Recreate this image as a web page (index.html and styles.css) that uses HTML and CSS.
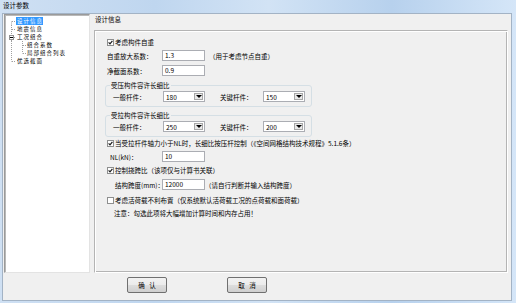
FILE: index.html
```html
<!DOCTYPE html>
<html lang="zh-CN">

<head>
    <meta charset="UTF-8">
    <title>设计参数</title>
    <link rel="stylesheet" href="styles.css">
</head>

<body>
    <div class="window">
        <div class="titlebar">设计参数</div>
        <div class="client">
            <div class="main">
                <!-- left tree -->
                <div class="tree">
                    <div class="node">
                        <svg width="11" height="8"><path d="M6.5 4.5V8M7 4.5H11" /></svg>
                        <span class="label selected">设计信息</span>
                    </div>
                    <div class="node">
                        <svg width="11" height="8"><path d="M6.5 0V8M7 4.5H11" /></svg>
                        <span class="label">地震信息</span>
                    </div>
                    <div class="node">
                        <svg width="11" height="8">
                            <path d="M6.5 0V2M6.5 7V8M9 4.5H11" />
                            <rect class="box" x="4.5" y="2.5" width="4" height="4" />
                            <path class="minus" d="M5 4.5H8" />
                        </svg>
                        <span class="label">工况组合</span>
                    </div>
                    <div class="node">
                        <svg width="21" height="8"><path d="M6.5 0V8M17.5 0V8M18 4.5H21" /></svg>
                        <span class="label">组合系数</span>
                    </div>
                    <div class="node">
                        <svg width="21" height="8"><path d="M6.5 0V8M17.5 0V4.5M18 4.5H21" /></svg>
                        <span class="label">局部组合列表</span>
                    </div>
                    <div class="node">
                        <svg width="11" height="8"><path d="M6.5 0V4.5M7 4.5H11" /></svg>
                        <span class="label">优选截面</span>
                    </div>
                </div>

                <!-- right page -->
                <div class="panel">
                    <div class="panel-title">设计信息</div>
                    <div class="panel-box">
                        <div class="row check-row mt6">
                            <span class="cb"><svg width="5" height="5"><path d="M0.6 2.4L2 3.9L4.4 0.9" /></svg></span>
                            考虑构件自重
                        </div>
                        <div class="row field-row mt3">
                            <span class="lbl">自重放大系数：</span>
                            <span class="edit">1.3</span>
                            <span class="hint">（用于考虑节点自重）</span>
                        </div>
                        <div class="row field-row mt4">
                            <span class="lbl">净截面系数：</span>
                            <span class="edit">0.9</span>
                        </div>

                        <fieldset class="group mt5">
                            <legend>受压构件容许长细比</legend>
                            <div class="group-row">
                                <span class="lbl">一般杆件：</span>
                                <span class="combo">180<i class="drop"></i></span>
                                <span class="lbl lbl-key">关键杆件：</span>
                                <span class="combo">150<i class="drop"></i></span>
                            </div>
                        </fieldset>

                        <fieldset class="group mt4">
                            <legend>受拉构件容许长细比</legend>
                            <div class="group-row">
                                <span class="lbl">一般杆件：</span>
                                <span class="combo">250<i class="drop"></i></span>
                                <span class="lbl lbl-key">关键杆件：</span>
                                <span class="combo">200<i class="drop"></i></span>
                            </div>
                        </fieldset>

                        <div class="row check-row mt1">
                            <span class="cb"><svg width="5" height="5"><path d="M0.6 2.4L2 3.9L4.4 0.9" /></svg></span>
                            当受拉杆件轴力小于NL时，长细比按压杆控制（《空间网格结构技术规程》5.1.6条）
                        </div>
                        <div class="row field-row mt3">
                            <span class="lbl lbl-nl">NL(kN)：</span>
                            <span class="edit">10</span>
                        </div>
                        <div class="row check-row mt3">
                            <span class="cb"><svg width="5" height="5"><path d="M0.6 2.4L2 3.9L4.4 0.9" /></svg></span>
                            控制挠跨比（该项仅与计算书关联）
                        </div>
                        <div class="row field-row mt4">
                            <span class="lbl lbl-span">结构跨度(mm)：</span>
                            <span class="edit">12000</span>
                            <span class="hint hint-near">（请自行判断并输入结构跨度）</span>
                        </div>
                        <div class="row check-row mt5">
                            <span class="cb"></span>
                            考虑活荷载不利布置（仅系统默认活荷载工况的点荷载和面荷载）
                        </div>
                        <div class="row note mt3">注意：勾选此项将大幅增加计算时间和内存占用！</div>
                    </div>
                </div>
            </div>

            <div class="buttons">
                <button>确 认</button>
                <button>取 消</button>
            </div>
        </div>
    </div>
</body>

</html>
```

FILE: styles.css
```css
html,
body {
    margin: 0;
    padding: 0;
}

body {
    background: #c6dcf3;
    font-family: "Noto Sans CJK SC", "Liberation Sans", sans-serif;
    font-size: 6.5px;
    line-height: 8px;
    color: #000;
}

.window {
    width: 516px;
    height: 303px;
    display: flex;
    flex-direction: column;
    background: linear-gradient(90deg, #cfe0f3 0%, #bfd6ef 30%, #d2e3f5 52%, #b7d1ed 76%, #d5e6f8 100%);
}

.titlebar {
    height: 13px;
    padding-left: 3px;
    line-height: 11px;
}

.client {
    flex: 1;
    margin: 0 4px 2px 2px;
    border: 1px solid #a3b3c5;
    background: #f0f0f0;
    display: flex;
    flex-direction: column;
}

.main {
    display: flex;
    gap: 4px;
    height: 259px;
    padding: 0 3px 0 1px;
}

/* tree */

.tree {
    width: 86px;
    box-sizing: border-box;
    padding-top: 2px;
    background: #fff;
    border: 1px solid;
    border-color: #9a9a9a #e3e3e3 #e3e3e3 #9a9a9a;
    box-shadow: inset 1px 1px 0 #b9b9b9;
}

.node {
    display: flex;
    height: 8px;
    align-items: center;
}

.node svg {
    display: block;
    flex: none;
}

.node path {
    fill: none;
    stroke: #a0a0a0;
    stroke-width: 1;
    stroke-dasharray: 1 1;
}

.node .box {
    fill: #fff;
    stroke: #919191;
}

.node .minus {
    stroke: #000;
    stroke-dasharray: none;
}

.label {
    display: block;
    height: 8px;
    padding: 0 0 0 1px;
    font-size: 5.5px;
    letter-spacing: 1px;
    white-space: nowrap;
}

.selected {
    background: #3399ff;
    color: #fff;
}

/* right page */

.panel {
    flex: 1;
    display: flex;
    flex-direction: column;
}

.panel-title {
    height: 16px;
    box-sizing: border-box;
    padding: 1px 0 0 1px;
}

.panel-box {
    flex: 1;
    display: flex;
    flex-direction: column;
    align-items: flex-start;
    padding-left: 10px;
    border: 1px solid;
    border-color: #b4b4b4 #fff #fff #b4b4b4;
    box-shadow: inset 1px 1px 0 #fff, inset -1px -1px 0 #b4b4b4;
}

.row {
    display: flex;
    align-items: center;
    margin-left: 2px;
    white-space: nowrap;
}

.check-row {
    height: 10px;
}

.field-row {
    height: 11px;
}

.mt1 { margin-top: 1px; }
.mt3 { margin-top: 3px; }
.mt4 { margin-top: 4px; }
.mt5 { margin-top: 5px; }
.mt6 { margin-top: 6px; }

.cb {
    width: 7px;
    height: 7px;
    box-sizing: border-box;
    margin-right: 1px;
    border: 1px solid #8e8f8f;
    background: #fff;
    flex: none;
}

.cb svg {
    display: block;
}

.cb path {
    fill: none;
    stroke: #1a1a1a;
    stroke-width: 1.2;
}

.lbl {
    flex: none;
    width: 55px;
    white-space: nowrap;
}

.lbl-nl {
    margin-left: 3px;
    width: 52px;
}

.lbl-span {
    margin-left: 8px;
    width: 47px;
}

.edit {
    width: 43px;
    height: 11px;
    box-sizing: border-box;
    padding-left: 2px;
    line-height: 9px;
    background: #fff;
    border: 1px solid #abadb3;
    flex: none;
}

.hint {
    margin-left: 4px;
}

.hint-near {
    margin-left: 0;
}

.note {
    height: 10px;
    margin-left: 9px;
}

/* group boxes */

.group {
    width: 207px;
    box-sizing: border-box;
    margin: 0;
    padding: 0 4px 4px 4px;
    border: 1px solid #d5dfe5;
    border-radius: 3px;
    min-inline-size: 0;
}

.group.mt4 { margin-top: 4px; }
.group.mt5 { margin-top: 5px; }

.group legend {
    padding: 0 1px;
    line-height: 8px;
}

.group-row {
    display: flex;
    align-items: center;
    height: 11px;
    margin-top: 2px;
    padding-left: 3px;
}

.group-row .lbl {
    width: 50px;
}

.group-row .lbl-key {
    width: 43px;
    margin-left: 15px;
}

.combo {
    flex: none;
    width: 42px;
    height: 11px;
    box-sizing: border-box;
    display: flex;
    align-items: center;
    justify-content: space-between;
    padding: 0 1px 0 2px;
    background: #fff;
    border: 1px solid #abadb3;
}

.drop {
    width: 9px;
    height: 7px;
    box-sizing: border-box;
    display: flex;
    align-items: center;
    justify-content: center;
    border: 1px solid #a7a7a7;
    background: #e9e9e9;
}

.drop::after {
    content: "";
    border-top: 3px solid #000;
    border-left: 3px solid transparent;
    border-right: 3px solid transparent;
}

/* bottom buttons */

.buttons {
    display: flex;
    gap: 60px;
    padding: 4px 0 0 124px;
}

button {
    width: 40px;
    height: 16px;
    padding: 0;
    font: inherit;
    word-spacing: 3px;
    color: #000;
    border: 1px solid #707070;
    border-radius: 2px;
    background: linear-gradient(#f2f2f2, #ebebeb 50%, #dddddd 51%, #cfcfcf);
}
```
